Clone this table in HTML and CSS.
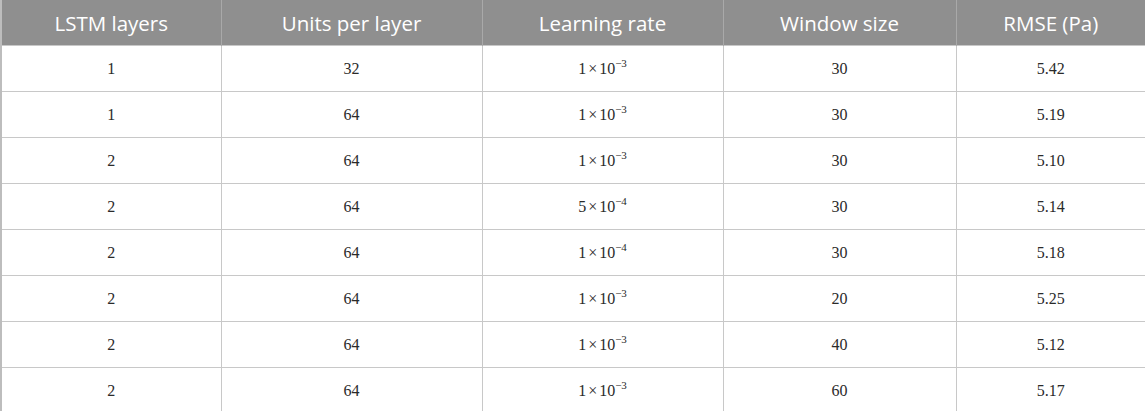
FILE: index.html
```html
<!DOCTYPE html>
<html>
<head>
<meta charset="utf-8">
<link rel="stylesheet" href="styles.css">
</head>
<body>
<table class="grid">
  <colgroup>
    <col class="c1"><col class="c2"><col class="c3"><col class="c4"><col class="c5">
  </colgroup>
  <thead>
    <tr><th>LSTM layers</th><th>Units per layer</th><th>Learning rate</th><th>Window size</th><th>RMSE (Pa)</th></tr>
  </thead>
  <tbody>
    <tr><td>1</td><td>32</td><td>1<span class="x">×</span>10<sup>−3</sup></td><td>30</td><td>5.42</td></tr>
    <tr><td>1</td><td>64</td><td>1<span class="x">×</span>10<sup>−3</sup></td><td>30</td><td>5.19</td></tr>
    <tr><td>2</td><td>64</td><td>1<span class="x">×</span>10<sup>−3</sup></td><td>30</td><td>5.10</td></tr>
    <tr><td>2</td><td>64</td><td>5<span class="x">×</span>10<sup>−4</sup></td><td>30</td><td>5.14</td></tr>
    <tr><td>2</td><td>64</td><td>1<span class="x">×</span>10<sup>−4</sup></td><td>30</td><td>5.18</td></tr>
    <tr><td>2</td><td>64</td><td>1<span class="x">×</span>10<sup>−3</sup></td><td>20</td><td>5.25</td></tr>
    <tr><td>2</td><td>64</td><td>1<span class="x">×</span>10<sup>−3</sup></td><td>40</td><td>5.12</td></tr>
    <tr><td>2</td><td>64</td><td>1<span class="x">×</span>10<sup>−3</sup></td><td>60</td><td>5.17</td></tr>
  </tbody>
</table>
</body>
</html>
```
FILE: styles.css
```css
html, body { margin: 0; padding: 0; background: #fff; }
.grid {
  width: 1145px;
  border-collapse: collapse;
  table-layout: fixed;
}
.c1 { width: 220px; }
.c2 { width: 261px; }
.c3 { width: 241px; }
.c4 { width: 233px; }
.c5 { width: 190px; }
.grid th {
  background: #8f8f8f;
  color: #fff;
  font-family: "Open Sans", "Noto Sans", sans-serif;
  font-weight: 400;
  font-size: 20.5px;
  height: 45px;
  padding: 0;
  text-align: center;
  vertical-align: middle;
  border-left: 1px solid #a9a9a9;
  border-right: 1px solid #a9a9a9;
}
.grid td {
  font-family: "Liberation Serif", "Times New Roman", serif;
  font-size: 16px;
  color: #2a2a2a;
  height: 45px;
  padding: 0;
  text-align: center;
  vertical-align: middle;
  border: 1px solid #c8c8c8;
}
.grid td:first-child, .grid th:first-child { border-left: 2px solid #bdbdbd; }
.grid td:last-child, .grid th:last-child { border-right: 2px solid #b0b0b0; }
.x { margin: 0 2px; }
sup { font-size: 11px; vertical-align: 7px; line-height: 0; }
```
